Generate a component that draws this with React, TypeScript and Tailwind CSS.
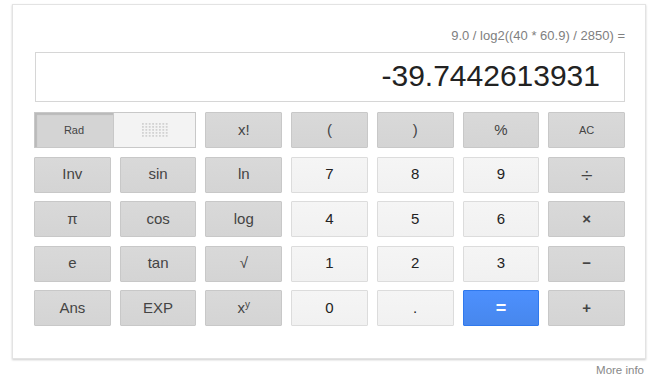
const font = { fontFamily: '"Liberation Sans", Arial, sans-serif' };

type Key = { label: React.ReactNode; kind: "fn" | "num" | "eq"; small?: boolean };

const fn = (label: React.ReactNode, small = false): Key => ({ label, kind: "fn", small });
const num = (label: React.ReactNode): Key => ({ label, kind: "num" });

const DotGrid = () => {
  const dots = [];
  for (let r = 0; r < 5; r++) {
    for (let c = 0; c < 8; c++) {
      dots.push(<rect key={`${r}-${c}`} x={c * 3.4} y={r * 3} width={1.8} height={1.8} fill="#d2d2d2" />);
    }
  }
  return (
    <svg width="26" height="14" viewBox="0 0 26 14">
      {dots}
    </svg>
  );
};

const rows: Key[][] = [
  [fn("x!"), fn("("), fn(")"), fn("%"), fn("AC", true)],
  [fn("Inv"), fn("sin"), fn("ln"), num("7"), num("8"), num("9"), fn(<span className="text-[21px] leading-none">÷</span>)],
  [fn("π"), fn("cos"), fn("log"), num("4"), num("5"), num("6"), fn(<span className="font-bold">×</span>)],
  [fn("e"), fn("tan"), fn("√"), num("1"), num("2"), num("3"), fn(<span className="font-bold">−</span>)],
  [
    fn("Ans"),
    fn("EXP"),
    fn(
      <span>
        x<sup className="text-[10px]">y</sup>
      </span>
    ),
    num("0"),
    num("."),
    { label: <span className="font-bold text-[18px]">=</span>, kind: "eq" },
    fn(<span className="font-bold">+</span>),
  ],
];

const keyClass = {
  fn: "bg-gradient-to-b from-[#d9d9d9] to-[#d4d4d4] border-[#c8c8c8] text-[#444]",
  num: "bg-gradient-to-b from-[#f5f5f5] to-[#f1f1f1] border-[#dcdcdc] text-[#222]",
  eq: "bg-gradient-to-b from-[#4d90fe] to-[#4787ed] border-[#3079ed] text-white",
};

const KeyButton = ({ k }: { k: Key }) => (
  <div
    className={`h-[36px] flex items-center justify-center border rounded-[1px] ${keyClass[k.kind]} ${
      k.small ? "text-[11px]" : "text-[15px]"
    }`}
  >
    {k.label}
  </div>
);

export default function App() {
  return (
    <div className="w-[652px] h-[385px] bg-white overflow-hidden" style={font}>
      <div className="ml-[12px] mt-[4px] w-[634px] border border-[#e3e3e3] shadow-[0_1px_2px_rgba(0,0,0,0.2)] pl-[21px] pr-[20px] pt-[22px] pb-[32px]">
        <div className="h-[17px] text-right text-[13px] leading-[17px] text-[#808080]">
          9.0 / log2((40 * 60.9) / 2850) =
        </div>
        <div className="ml-[1px] mt-[8px] h-[50px] border border-[#d6d6d6] flex items-center justify-end pr-[24px] pb-[4px] text-[30px] text-[#222]">
          -39.7442613931
        </div>
        <div className="mt-[10px] grid grid-cols-7 gap-x-[9px] gap-y-[8.5px]">
          <div className="col-span-2 h-[36px] flex border border-[#c8c8c8]">
            <div className="w-[78px] flex items-center justify-center bg-[#d4d4d4] shadow-[inset_2px_2px_1px_rgba(0,0,0,0.12)] text-[11px] text-[#444]">
              Rad
            </div>
            <div className="flex-1 flex items-center justify-center bg-[#f3f3f3] border-l border-[#c8c8c8]">
              <DotGrid />
            </div>
          </div>
          {rows.flat().map((k, i) => (
            <KeyButton key={i} k={k} />
          ))}
        </div>
      </div>
      <div className="w-[644px] text-right text-[11.5px] text-[#888] mt-[3px]">More info</div>
    </div>
  );
}
